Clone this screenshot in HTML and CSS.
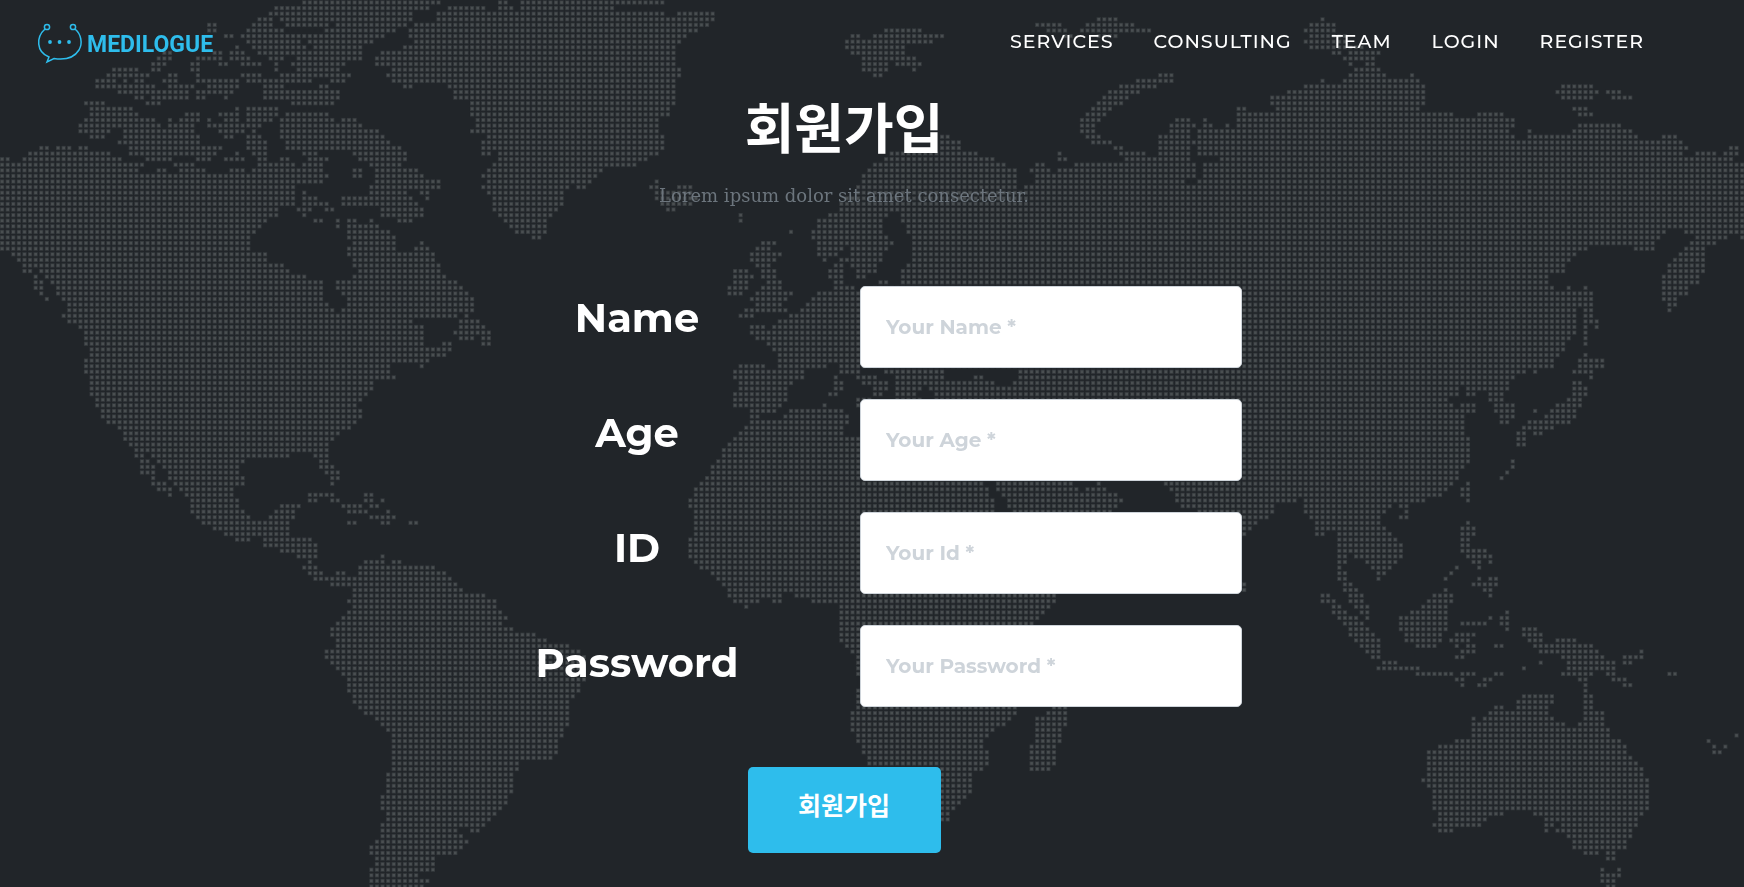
FILE: index.html
```html
<!DOCTYPE html>
<html lang="ko">
<head>
    <meta charset="UTF-8">
    <meta name="viewport" content="width=device-width, initial-scale=1.0">
    <title>Medilogue - 회원가입</title>
    <link rel="stylesheet" href="styles.css">
</head>
<body>
    <canvas id="world-map" class="world-map" width="1744" height="887" aria-hidden="true"></canvas>

    <header class="navbar">
        <a href="#" class="brand">
            <svg class="brand-icon" viewBox="0 0 46 42" fill="none" stroke="currentColor" stroke-width="1.5">
                <circle cx="10" cy="4" r="2.6"/>
                <circle cx="36" cy="4" r="2.6"/>
                <path d="M8 6C-1 14 -1 29 12 34L10 39L17 35.500C27 37 37 35 42 27C46 20 44 11 38 6"/>
                <g fill="currentColor" stroke="none">
                    <circle cx="13" cy="19" r="1.900"/>
                    <circle cx="22.500" cy="19" r="1.900"/>
                    <circle cx="32" cy="19" r="1.900"/>
                </g>
            </svg>
            <span class="brand-name">MEDILOGUE</span>
        </a>
        <nav class="nav-links">
            <a href="#services">SERVICES</a>
            <a href="#consulting">CONSULTING</a>
            <a href="#team">TEAM</a>
            <a href="#login">LOGIN</a>
            <a href="#register">REGISTER</a>
        </nav>
    </header>

    <main class="register" id="register">
        <h2>회원가입</h2>
        <p class="subheading">Lorem ipsum dolor sit amet consectetur.</p>

        <form class="register-form">
            <div class="fields">
                <div class="labels">
                    <label for="name">Name</label>
                    <label for="age">Age</label>
                    <label for="user-id">ID</label>
                    <label for="password">Password</label>
                </div>
                <div class="inputs">
                    <input type="text" id="name" placeholder="Your Name *">
                    <input type="text" id="age" placeholder="Your Age *">
                    <input type="text" id="user-id" placeholder="Your Id *">
                    <input type="password" id="password" placeholder="Your Password *">
                </div>
            </div>
            <button type="submit">회원가입</button>
        </form>
    </main>

    <script src="map.js"></script>
</body>
</html>
```
FILE: styles.css
```css
:root {
    --primary-color: #2ebdec;
    --background-color: #212529;
    --muted-color: #6c757d;
    --border-color: #ced4da;
}

* {
    box-sizing: border-box;
}

body {
    margin: 0;
    min-height: 100vh;
    position: relative;
    font-family: Montserrat, Inter, "Noto Sans CJK KR", sans-serif;
    background-color: var(--background-color);
    color: white;
}

/* Dotted world map behind the page */
.world-map {
    position: absolute;
    top: 0;
    left: 0;
    width: 100%;
    height: 100%;
    object-fit: cover;
    z-index: -1;
}

.navbar {
    display: flex;
    justify-content: space-between;
    align-items: center;
    height: 82px;
    padding: 0 100px 0 37px;
}

.brand {
    display: flex;
    align-items: center;
    gap: 4px;
    padding-top: 6px;
    color: var(--primary-color);
    text-decoration: none;
}

.brand-icon {
    width: 46px;
    height: 42px;
}

.brand-name {
    font-family: Roboto, sans-serif;
    font-size: 23px;
    font-weight: bold;
}

.nav-links {
    display: flex;
    gap: 40px;
}

.nav-links a {
    color: white;
    font-size: 19px;
    font-weight: 500;
    letter-spacing: 1px;
    text-decoration: none;
}

.register {
    display: flex;
    flex-direction: column;
    align-items: center;
    padding: 0 56px 32px 0;
}

h2 {
    margin: 0;
    font-size: 54px;
    font-weight: bold;
    line-height: 96px;
}

.subheading {
    margin: 2px 0 74px;
    font-family: "Roboto Slab", "DejaVu Serif", serif;
    font-size: 18px;
    line-height: 32px;
    color: var(--muted-color);
}

.register-form {
    display: flex;
    flex-direction: column;
    align-items: center;
    gap: 60px;
    width: 100%;
    max-width: 796px;
}

.fields {
    display: grid;
    grid-template-columns: 1fr 1fr;
    gap: 32px;
    width: 100%;
}

.labels {
    display: flex;
    flex-direction: column;
    align-items: center;
    gap: 67px;
    padding-top: 8px;
}

.labels label {
    font-size: 40px;
    font-weight: bold;
    line-height: 48px;
}

.inputs {
    display: flex;
    flex-direction: column;
    gap: 31px;
}

.inputs input {
    width: 100%;
    height: 82px;
    padding: 0 25px;
    border: 1px solid var(--border-color);
    border-radius: 5px;
    background-color: white;
    font-family: inherit;
    font-size: 20px;
    font-weight: bold;
}

.inputs input::placeholder {
    color: var(--border-color);
    opacity: 1;
}

button {
    width: 193px;
    height: 86px;
    padding: 0 0 12px;
    border: none;
    border-radius: 5px;
    background-color: var(--primary-color);
    color: white;
    font-family: inherit;
    font-size: 25px;
    font-weight: bold;
    cursor: pointer;
}
```
FILE: map.js
```js
// Dotted world map. Land is stored on sheets, each with its own origin and scale.
// shapes: outlines of large areas, rows: "y: x1-x2 x1-x2" spans for coasts and islands.
const STEP = 5.595;
const START_X = 2.1;
const START_Y = 2.5;

const sheets = [
    {
        x: 0, y: 0, scaleX: 0.3699, scaleY: 0.3333,
        shapes: [
            // North and South America
            `M-10 470 22 470 30 487 55 487 60 470 75 455 100 452 120 436 130 436 135 452 165 436 190 436 200 452
            225 436 235 436 240 452 300 453 305 470 330 470 335 487 385 487 388 502 375 520 682 520 682 503 695 500
            695 480 680 465 680 452 665 448 665 400 705 402 720 418 735 440 725 452 720 465 725 485 755 485 755 470
            780 470 785 487 797 487 797 503 815 503 815 487 830 480 815 465 815 452 770 450 770 415 755 415 755 352
            770 338 888 338 905 355 905 370 920 378 930 355 960 352 980 378 995 390 1010 385 1022 388 1055 425
            1085 438 1100 455 1098 480 1088 500 1130 505 1150 535 1190 538 1190 568 1165 570 1155 600 1145 585
            1130 585 1130 568 1095 570 1115 590 1130 605 1145 625 1145 650 1115 668 1075 668 1065 650 1030 650
            1028 620 1000 618 920 618 920 590 995 588 1000 555 1012 550 1012 500 1000 500 975 482 955 468
            950 450 860 450 860 470 888 475 875 490 875 520 888 530 870 550 815 553 797 568 797 618 755 620
            750 650 725 655 705 680 690 700 678 705 675 755 722 760 722 785 768 790 785 810 815 825 875 842
            875 900 900 925 915 940 935 922 935 890 920 885 920 870 908 868 908 842 950 840 955 825 968 810
            955 802 955 775 938 768 938 740 950 735 938 720 938 655 962 655 975 672 995 672 1000 655 1008 655
            1010 672 1025 680 1055 695 1070 715 1070 755 1118 755 1118 740 1135 722 1145 735 1160 740 1175 765
            1190 795 1200 825 1235 842 1250 860 1265 880 1280 895 1280 938 1262 955 1250 940 1220 955 1118 958
            1118 972 1145 978 1145 1040 1195 1040 1195 1025 1220 1025 1220 1055 1205 1075 1160 1078 1160 1090
            1140 1108 1118 1088 1085 1090 1055 1095 1055 1122 1070 1125 1068 1142 1010 1144 1005 1172 990 1192
            978 1205 970 1215 978 1240 975 1262 945 1287 918 1297 905 1320 888 1332 888 1365 885 1380 905 1395
            918 1415 915 1442 900 1460 890 1450 890 1425 860 1405 860 1390 848 1375 845 1360 790 1357 770 1374
            665 1377 655 1395 645 1405 645 1425 660 1430 660 1458 635 1462 630 1490 645 1500 648 1525 660 1530
            680 1562 725 1560 725 1545 740 1530 755 1512 812 1512 810 1525 797 1530 797 1555 782 1560 780 1600
            770 1610 840 1615 858 1630 858 1680 845 1690 858 1710 875 1725 880 1732 900 1732 908 1712 935 1712
            938 1728 965 1730 970 1695 985 1680 1030 1680 1030 1663 1040 1663 1040 1695 1058 1680 1085 1680
            1088 1695 1130 1697 1150 1695 1175 1697 1205 1715 1220 1735 1235 1755 1250 1775 1310 1780 1312 1795
            1340 1800 1358 1835 1370 1855 1360 1875 1385 1882 1390 1897 1447 1897 1450 1912 1475 1915 1480 1930
            1535 1930 1552 1948 1575 1960 1590 1990 1590 2040 1568 2065 1550 2098 1535 2110 1535 2180 1522 2190
            1520 2215 1508 2225 1508 2268 1480 2283 1415 2285 1400 2315 1388 2325 1388 2380 1370 2398 1370 2418
            1340 2450 1310 2483 1295 2500 1272 2500 1270 2485 1240 2485 1250 2505 1265 2525 1250 2550 1235 2572
            1175 2574 1175 2618 1130 2620 1130 2635 1160 2640 1155 2655 1145 2665 1140 2690 998 2690 998 2600
            1015 2595 1012 2572 998 2568 998 2535 1015 2515 1028 2500 1028 2465 1045 2460 1040 2435 1028 2430
            1028 2385 1043 2375 1043 2320 1058 2310 1058 2200 1040 2190 1025 2165 1010 2150 980 2145 968 2120
            950 2095 937 2075 937 2035 910 2010 878 1975 878 1948 905 1945 905 1925 892 1910 892 1880 937 1835
            950 1820 937 1808 937 1797 952 1795 952 1765 937 1758 915 1750 915 1760 892 1760 892 1745 848 1742
            845 1725 830 1720 815 1708 815 1698 830 1695 830 1678 800 1675 797 1660 755 1660 752 1643 710 1640
            710 1612 680 1610 675 1627 635 1627 632 1612 605 1610 600 1595 575 1592 572 1577 545 1577 525 1557
            512 1540 512 1500 497 1490 482 1470 468 1455 452 1420 435 1400 420 1385 405 1370 392 1340 375 1328
            385 1340 390 1375 405 1382 420 1400 420 1430 450 1450 465 1475 463 1495 452 1495 450 1480 422 1475
            405 1455 405 1430 375 1425 375 1385 360 1375 360 1345 345 1332 330 1300 318 1287 285 1272 270 1258
            270 1230 258 1222 255 1192 240 1187 240 1125 225 1120 225 1075 240 1070 240 1042 225 1037 228 990
            210 987 210 973 180 972 165 955 165 940 180 935 178 905 150 887 150 865 135 845 110 820 95 805
            90 788 45 787 30 772 15 757 -10 740Z`,
            // Greenland
            `M1405 -5 1405 33 1180 35 1178 50 1165 66 1115 68 1115 80 1100 85 1090 105 1115 118 1115 132 1090 135
            1085 152 1025 152 1012 170 1012 197 1050 200 1055 218 1042 225 1060 250 1090 252 1090 265 1115 265
            1118 252 1208 250 1210 265 1225 270 1225 298 1268 300 1270 350 1285 355 1285 380 1270 388 1270 402
            1310 402 1312 418 1300 425 1300 467 1328 468 1328 453 1345 455 1345 483 1328 490 1300 525 1312 540
            1300 560 1315 585 1330 590 1330 620 1345 650 1375 685 1395 703 1430 706 1440 720 1465 720 1480 695
            1480 660 1510 635 1525 600 1527 572 1545 570 1545 553 1555 570 1588 570 1600 552 1615 535 1632 503
            1705 500 1737 485 1785 468 1795 440 1795 405 1785 400 1782 352 1812 350 1815 320 1830 315 1828 250
            1842 235 1840 200 1828 195 1828 140 1840 130 1870 100 1900 82 1932 66 1932 35 1825 33 1825 50
            1795 48 1795 33 1660 30 1660 17 1795 15 1795 -5Z`,
        ],
        rows: `8: 823-1190 1350-1370
            24: 742-1160 1210-1310 1350-1385
            41: 730-1115
            58: 697-735 757-1115
            75: 565-580 682-735 770-890 920-1100
            91: 565-580 667-765 878-1070
            108: 607-630 652-1038
            125: 667-810 845-1010
            142: 640 682-830 850-975
            158: 440-460 575-595 622-655 697-770 785-975
            175: 425-460 530-600 620-675 727-765 800-975
            192: 410-445 520-540 592-615 650-705 745 787-935
            209: 305-370 410-430 515-540 745 800-920
            226: 290-395 455-480 535 650-705 757-945
            242: 258-315 337 363-385 440-480 530-645 667-840 893-930
            259: 258-420 455-525 560-645 712-765 862-885
            276: 318-510 530-630 712-915
            293: 363-385 410-510 530-555 610 712-915
            309: 228-280 395-430 787-900
            326: 242-355 640 667-750
            343: 242-370 500-540 592-645 667-750
            360: 228-415 458 485-540 565 605-645 667-735
            377: 212-430 455-525 560-660 665-705
            394: 212-300 335-525 592-660 685
            410: 242-285 335-540 605-630
            427: 318-540
            444: 350-600
            461: 350-585 640
            478: 392-465 530-570 605-660
            494: 470-525
            511: 425-450 485-555 620-660 955-975
            528: 955-975
            578: 820
            595: 815-860
            612: 815-885
            629: 805-840 880-900
            646: 820
            663: 848-870 912
            680: 912
            797: 60-85
            813: 60-85
            830: 95
            847: 95-110
            864: 95-110
            881: 110
            898: 125
            965: 1240-1295
            981: 1240-1310
            998: 1225-1325
            1015: 1240-1280 1300-1325
            1031: 1300-1325
            1485: 835-905 985-1005
            1501: 835-855 895-915 985-1005 1033
            1518: 925-975 1000-1020
            1535: 940-990 1048
            1552: 1000-1065
            1569: 940-960 1030-1048 1108-1126`,
    },
    {
        x: 580, y: 0, scaleX: 0.3699, scaleY: 0.3333,
        shapes: [
            // Scandinavia and northern Russia
            `M835 455 975 452 975 405 990 405 1025 420 1025 435 1055 455 1105 472 1135 488 1178 510 1180 553
            1190 568 1230 550 1230 520 1215 515 1215 505 1230 488 1252 488 1270 510 1270 525 1305 505 1350 488
            1395 488 1572 486 1572 638 670 638 700 630 700 600 735 590 745 560 762 550 762 520 775 505 805 488Z`,
            // Europe
            `M865 638 865 670 880 675 865 690 890 705 895 755 880 760 925 775 880 790 865 805 865 855 790 857
            790 873 640 875 625 893 595 925 580 943 535 958 520 975 505 988 500 975 460 975 460 1005 475 1022
            500 1025 520 1055 535 1060 535 1107 665 1107 668 1090 700 1090 700 1107 1572 1107 1572 638Z`,
            // Africa
            `M580 1225 712 1225 728 1245 728 1275 712 1280 712 1305 1050 1310 1090 1440 1092 1460 1107 1465
            1107 1490 1120 1495 1120 1530 1150 1650 1285 1780 1287 1810 1228 1880 1180 2120 1180 2145 1150 2180
            1118 2195 1105 2215 1090 2218 1090 2245 1107 2252 1107 2300 1085 2318 1062 2322 1062 2368 1045 2385
            1030 2415 985 2470 975 2470 777 2300 777 2270 762 2265 762 2238 745 2230 745 2200 732 2195 732 2130
            745 2115 745 2098 760 2030 745 2025 745 1965 728 1955 715 1940 700 1925 700 1812 625 1812 625 1795
            580 1792 580 1775 545 1775 545 1812 520 1812 515 1795 485 1795 485 1812 455 1812 450 1827 442 1827
            440 1812 415 1812 400 1795 400 1780 340 1710 310 1695 295 1675 295 1610 305 1605 305 1530 292 1525
            292 1493 307 1475 325 1445 340 1430 355 1420 355 1395 385 1375 385 1345 415 1325 415 1310 445 1285
            458 1270 458 1243 485 1243 485 1258 545 1258 548 1243Z`,
            // Madagascar
            `M1275 2115 1318 2115 1318 2180 1300 2185 1300 2230 1287 2235 1287 2300 1272 2318 1215 2318
            1215 2235 1228 2230 1228 2150 1260 2145Z`,
        ],
        rows: `58: 1400-1450
            75: 1232-1300 1370-1495
            91: 820-920 1262-1315 1355-1540
            108: 732-755 795-810 835-980 1310-1325 1405-1450
            125: 717-950
            142: 717-875
            158: 732-875
            175: 762-845 865-905
            192: 762-830 865-920
            209: 762-830 900
            226: 792-815 1566
            242: 1505-1566
            259: 1460-1550
            276: 1430-1515
            293: 1415-1480
            309: 1400-1460
            326: 1385-1430
            343: 1370-1415
            360: 1355-1400
            377: 1355-1390
            394: 1355-1390
            410: 1370-1405 1566
            427: 1385-1430
            444: 1445-1465 1566
            461: 1295 1460-1530
            478: 1295-1310 1475-1560
            545: 205
            562: 190-215 262-300
            578: 205-235 250-300
            595: 205-315
            612: 220-300
            629: 235-255
            646: 432 670-830
            663: 432 640-815
            680: 640-815
            696: 569 625-815
            713: 625-830
            730: 490-530 640-845
            746: 475-515 640-710 732-830
            763: 460-540 640-695 732-815
            780: 460-530 660 700-815 903
            797: 475-515 685-710 732-800
            813: 415-450 490-530 670-710 747-800
            830: 415-465 490-530 670-710 747-770
            847: 415-450 505-540 685-710 805-830
            864: 400-450 490-540 685-740
            881: 400-435 475-575
            898: 460-560
            915: 475-540
            931: 445-560
            948: 430-465
            1098: 430-500
            1115: 415-605 700-755 825-982 1185-1572
            1132: 415-605 690 748-798 852-982 1065-1090 1185-1572
            1149: 430-575 690-705 762-829 852-1117 1172-1572
            1166: 430-560 690-710 793-829 852-919 942-1572
            1182: 415-560 670-690 793-815 852-906 960-1572
            1199: 415-560 748-784 852-920 960-1572
            1216: 415-540 660 750
            1233: 460-530
            1451: 1125-1330 1403
            1468: 1125-1345 1370-1420
            1485: 1140-1455
            1501: 1155-1465
            1518: 1155-1450
            1535: 1170-1435`,
    },
    {
        x: 1160, y: 0, scaleX: 0.3725, scaleY: 0.3333,
        shapes: [
            // Asia
            `M-5 402 20 402 25 370 40 352 80 352 98 372 82 388 82 402 98 420 82 440 82 485 98 490 95 537 70 540
            70 550 95 555 112 530 112 488 160 485 160 475 140 468 100 465 100 385 112 380 115 352 125 352
            140 375 140 388 172 385 180 370 190 385 205 375 205 320 232 320 235 336 305 336 305 318 295 315
            295 285 335 282 340 268 380 267 385 252 430 252 432 236 440 236 445 252 485 250 490 236 505 220
            520 203 590 203 605 220 610 235 670 235 672 220 680 220 695 235 712 255 712 315 695 320 695 335
            785 337 790 352 845 352 850 337 920 337 922 352 950 355 950 385 937 388 950 402 950 418 985 418
            985 388 995 388 998 403 1100 403 1108 385 1120 370 1238 370 1252 388 1282 403 1285 420 1345 420
            1345 403 1372 403 1400 420 1418 440 1405 450 1405 468 1435 468 1435 453 1492 453 1492 468 1510 468
            1512 455 1528 450 1528 437 1552 437 1552 468 1538 485 1580 487 1580 720 1555 720 1550 703 1525 702
            1520 720 1490 722 1490 737 1465 738 1462 755 1462 815 1447 825 1447 855 1418 860 1415 888 1388 890
            1385 920 1372 938 1362 938 1360 905 1345 900 1345 825 1360 815 1360 790 1405 750 1420 722 1435 705
            1405 700 1405 687 1355 687 1355 703 1340 718 1325 735 1325 755 1285 755 1270 738 1252 738 1150 740
            1145 755 1118 757 1115 773 1088 790 1085 820 1055 825 1040 845 1055 862 1060 872 1088 872 1092 857
            1100 857 1105 872 1135 870 1135 857 1147 857 1147 872 1162 875 1162 955 1175 957 1175 988 1165 988
            1162 972 1147 972 1147 1038 1135 1038 1135 922 1118 920 1115 1005 1100 1022 1088 1055 1070 1072
            1055 1105 1012 1107 1008 1122 1000 1122 985 1107 985 1122 955 1124 940 1145 938 1172 920 1175
            920 1190 937 1208 950 1210 952 1258 938 1272 910 1272 905 1245 895 1240 895 1210 880 1203 880 1190
            890 1175 850 1174 845 1190 820 1190 820 1165 800 1165 800 1190 770 1195 785 1212 800 1220 805 1208
            845 1208 845 1240 818 1243 818 1305 830 1310 830 1390 815 1402 800 1420 800 1438 785 1458 770 1475
            755 1492 710 1495 710 1510 665 1512 665 1560 640 1560 640 1547 655 1540 650 1527 640 1510 620 1525
            605 1545 590 1560 590 1575 605 1580 650 1630 650 1678 635 1697 605 1722 590 1745 580 1745 580 1722
            565 1710 550 1695 550 1680 520 1675 505 1662 500 1697 487 1705 500 1715 515 1750 530 1765 545 1785
            545 1812 558 1820 558 1862 548 1862 535 1840 520 1825 505 1812 505 1785 490 1778 490 1745 475 1742
            475 1600 440 1595 440 1608 415 1608 415 1565 400 1560 385 1540 385 1500 375 1490 365 1510 308 1512
            303 1545 260 1575 230 1610 220 1612 100 1540 82 1530 82 1523 55 1525 40 1505 40 1480 25 1475
            8 1455 8 1440 -5 1430Z`,
        ],
        rows: `58: 435
            75: 400-470
            91: 385-470
            108: 400-490
            125: 385-500
            142: 400-545
            158: 460-485 505-590
            175: 490-575
            192: 510 550-575
            226: 0-30
            242: 0-30
            259: 1075-1160
            276: 1062-1175 1197-1235
            293: 1075-1160 1212-1265
            326: 1108-1145
            343: 1122-1160
            1065: 1140
            1082: 1122-1190
            1098: 1122-1190
            1115: 1108-1160
            1132: 1155
            1149: 1108-1130
            1166: 1108-1145
            1182: 1108-1145
            1199: 1092-1130
            1216: 1062-1130
            1233: 1005 1045-1115
            1249: 1030-1115
            1266: 985-1100
            1283: 970-1055
            1300: 960-975 1000-1020
            1316: 960-975
            1334: 960-975`,
    },
    {
        // South-east Asia and Australia
        x: 1160, y: 443, scaleX: 0.3725, scaleY: 0.3333,
        shapes: [],
        rows: `56: 945
            72: 945
            89: 930
            105: 915
            122: 825
            139: 810-825
            156: 810-825
            172: 825
            240: 825
            256: 810-845
            273: 810-845
            290: 810-825
            307: 810-825
            324: 810-875
            341: 825-885
            357: 840-855 885
            374: 795 855
            391: 780
            408: 765 855 885-905
            425: 225 840-905
            441: 225 765 870-885
            458: 435-450 735-780 885
            475: 435-465 720-780
            492: 465-480 705-770
            508: 465-495 675-770 930
            525: 480-525 645-770 885 915-930
            542: 495-540 645-770 810-870 915-930
            559: 510-555 645-770 930 975-1005
            576: 510-570 660-755 795-840 975-1020
            592: 525-585 660-750 780-830 990-1020 1065-1115
            609: 540-585 690-735 795 825-840 900-915 1005-1160
            626: 555-585 810-840 1020-1175 1290
            643: 570-585 795-810 1080-1190 1245-1290
            660: 600-630 1020 1095-1220 1245-1260
            676: 585-690 975 1095-1220
            693: 690-780 810-840 900-915 1080-1160 1200-1215 1365-1380
            710: 795-810 870-885 1125-1140 1215-1245
            726: 810 855-870 1140 1245-1260
            743: 1140
            760: 975-1050 1140-1155
            776: 960-1050 1140-1155
            793: 900-915 960-1035 1140-1155
            809: 885-1035 1140-1187
            826: 840 870-1050 1140-1187
            843: 840-1082 1125-1187
            860: 840-1202
            877: 840-1202 1545
            893: 795-1232 1470
            910: 750-1247 1485 1515
            927: 720-1247 1485-1500
            943: 720-1262
            960: 720-1277
            976: 720-1292
            993: 720-1292
            1010: 705-1307
            1027: 720-1307
            1044: 735-1307
            1061: 735-1307
            1077: 735-1307
            1094: 735-1307
            1110: 750-917 1005-1292
            1127: 750-870 1035-1277
            1144: 735-855 1035-1050 1080-1277
            1161: 750-780 1035 1065-1262
            1178: 1095-1262
            1194: 1110-1247
            1211: 1110-1247
            1228: 1140-1170 1200-1215
            1245: 1200-1215
            1278: 1185 1230
            1295: 1185-1230
            1312: 1185-1215
            1328: 1200-1215`,
    },
];

function readRows(text) {
    return text.trim().split('\n').map(line => {
        const [y, spans] = line.split(':');
        return {
            y: Number(y),
            spans: spans.trim().split(' ').map(span => {
                const [from, to] = span.split('-').map(Number);
                return [from, to || from];
            }),
        };
    });
}

function drawMap() {
    const canvas = document.getElementById('world-map');
    const ctx = canvas.getContext('2d');
    const areas = sheets.map(sheet => ({
        ...sheet,
        paths: sheet.shapes.map(shape => new Path2D(shape)),
        lines: readRows(sheet.rows),
    }));

    function isLand(px, py) {
        return areas.some(area => {
            const x = (px - area.x) / area.scaleX;
            const y = (py - area.y) / area.scaleY;
            return area.paths.some(path => ctx.isPointInPath(path, x, y)) ||
                area.lines.some(line => Math.abs(line.y - y) < 8.4 &&
                    line.spans.some(([from, to]) => x > from - 7.5 && x < to + 7.5));
        });
    }

    // each dot is a small square with a fainter rim
    function drawDot(x, y) {
        ctx.fillStyle = 'rgba(90, 95, 97, 0.35)';
        ctx.fillRect(x - 2.1, y - 2.1, 4.2, 4.2);
        ctx.fillStyle = 'rgba(90, 95, 97, 0.6)';
        ctx.fillRect(x - 1.3, y - 1.3, 2.6, 2.6);
    }

    for (let y = START_Y; y < canvas.height; y += STEP) {
        for (let x = START_X; x < canvas.width; x += STEP) {
            if (isLand(x, y)) {
                drawDot(x, y);
            }
        }
    }
}

drawMap();
```
